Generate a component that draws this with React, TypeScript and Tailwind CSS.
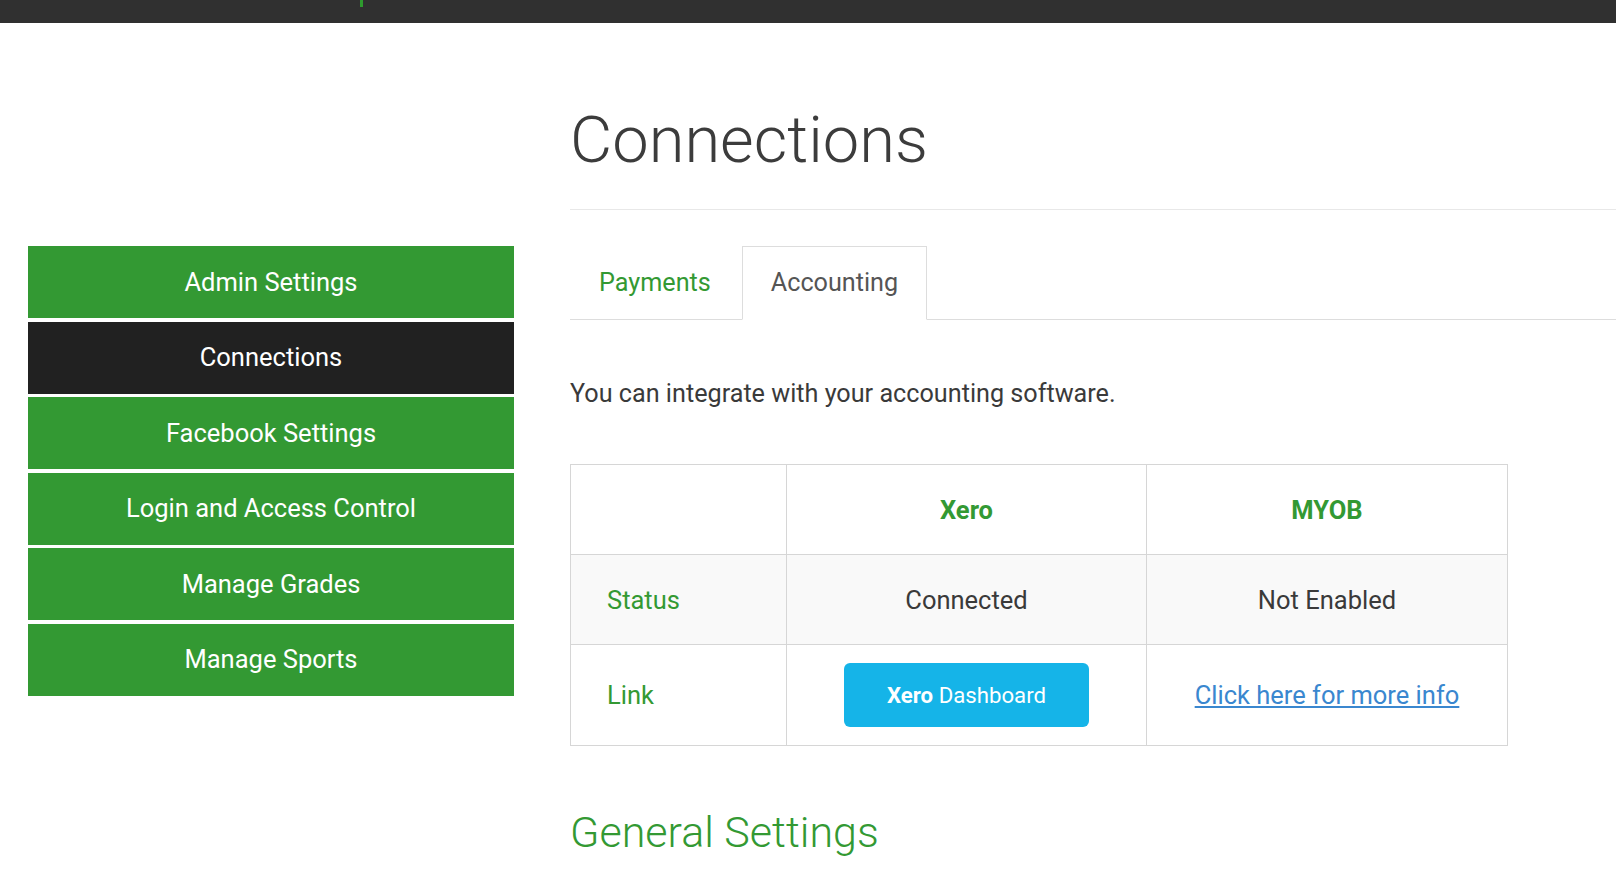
import React from "react";

const menu = [
  { label: "Admin Settings", active: false },
  { label: "Connections", active: true },
  { label: "Facebook Settings", active: false },
  { label: "Login and Access Control", active: false },
  { label: "Manage Grades", active: false },
  { label: "Manage Sports", active: false },
];

export default function App() {
  return (
    <div className="min-h-screen bg-white font-['Roboto',sans-serif] text-[#333] overflow-hidden">
      {/* top bar */}
      <header className="h-[23px] bg-[#303030] pl-[360px]">
        <div className="w-[3px] h-[7px] bg-[#2e9a2e]"></div>
      </header>

      <div className="flex pl-[28px]">
        <nav className="w-[486px] shrink-0 mt-[223px] flex flex-col gap-[3.5px]">
          {menu.map((m) => (
            <a
              key={m.label}
              href="#"
              className={
                "h-[72px] flex items-center justify-center text-white text-[25.5px] " +
                (m.active ? "bg-[#212121]" : "bg-[#339933]")
              }
            >
              {m.label}
            </a>
          ))}
        </nav>

        <main className="flex-1 ml-[56px]">
          <h1 className="mt-[77px] text-[65px] leading-[80px] font-light text-[#3c3c3c]">
            Connections
          </h1>
          <div className="mt-[29px] border-t border-[#e8e8e8]"></div>

          <ul className="mt-[36px] flex border-b border-[#dddddd] h-[74px]">
            <li className="-mb-px mr-[2px]">
              <a
                href="#"
                className="h-[74px] flex items-center px-[28px] border border-transparent text-[25.2px] leading-[36px] text-[#339933]"
              >
                Payments
              </a>
            </li>
            <li className="-mb-px">
              <a
                href="#"
                className="h-[74px] flex items-center px-[28px] border border-[#dddddd] border-b-white bg-white text-[25.2px] leading-[36px] text-[#555]"
              >
                Accounting
              </a>
            </li>
          </ul>

          <p className="mt-[56px] text-[25.2px] leading-[36px] text-[#3a3a3a]">
            You can integrate with your accounting software.
          </p>

          <table className="mt-[52px] w-[937px] table-fixed border-collapse text-[25.5px] leading-[36px]">
            <colgroup>
              <col className="w-[216px]" />
              <col className="w-[360px]" />
              <col className="w-[361px]" />
            </colgroup>
            <tbody>
              <tr className="h-[90px]">
                <td className="border border-[#d6d6d6]"></td>
                <td className="border border-[#d6d6d6] text-center font-bold text-[#339933]">
                  Xero
                </td>
                <td className="border border-[#d6d6d6] text-center font-bold text-[#339933]">
                  MYOB
                </td>
              </tr>
              <tr className="h-[90px] bg-[#f9f9f9]">
                <td className="border border-[#d6d6d6] pl-[36px] text-[#339933]">Status</td>
                <td className="border border-[#d6d6d6] text-center text-[#3a3a3a]">Connected</td>
                <td className="border border-[#d6d6d6] text-center text-[#3a3a3a]">Not Enabled</td>
              </tr>
              <tr className="h-[101px]">
                <td className="border border-[#d6d6d6] pl-[36px] text-[#339933]">Link</td>
                <td className="border border-[#d6d6d6] text-center">
                  <a
                    href="#"
                    className="inline-flex items-center justify-center w-[245px] h-[64px] rounded-[6px] bg-[#15b4e8] text-white text-[22.2px] align-middle"
                  >
                    <span className="font-bold">Xero</span>&nbsp;Dashboard
                  </a>
                </td>
                <td className="border border-[#d6d6d6] text-center">
                  <a href="#" className="text-[#3a87cf] underline">
                    Click here for more info
                  </a>
                </td>
              </tr>
            </tbody>
          </table>

          <h2 className="mt-[60px] text-[43px] leading-[52px] font-light text-[#339933]">
            General Settings
          </h2>
        </main>
      </div>
    </div>
  );
}
